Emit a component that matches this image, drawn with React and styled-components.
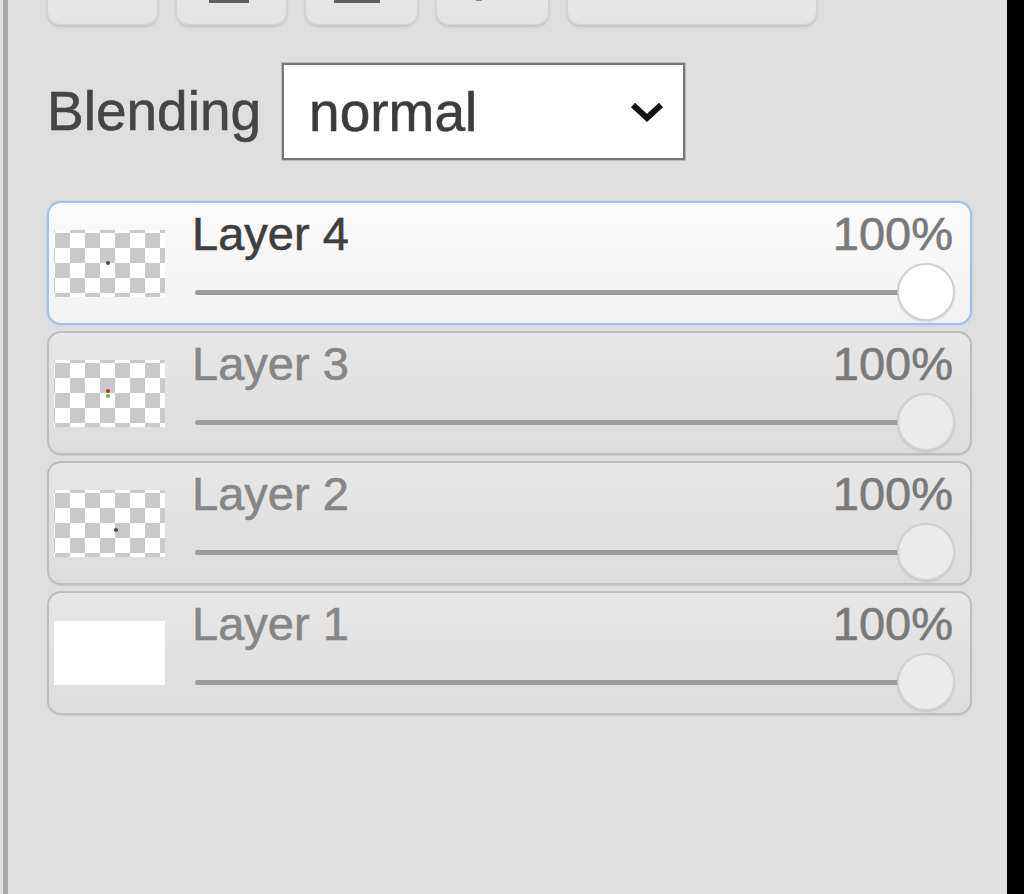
import React from "react";
import styled, { createGlobalStyle } from "styled-components";

const Global = createGlobalStyle`
  html, body { margin: 0; padding: 0; background: #dedede; }
  #root { height: 894px; }
  * { box-sizing: border-box; }
`;

const Page = styled.div`
  display: flex;
  height: 894px;
  overflow: hidden;
  background: #dedede;
  font-family: "Liberation Sans", Arial, sans-serif;
`;

const Frame = styled.div`
  flex: 1;
  margin-left: 3px;
  border-left: 5px solid #a9a9a9;
  padding: 0 35px 0 39px;
  display: flex;
  flex-direction: column;
`;

const BlackEdge = styled.div`
  width: 17px;
  background: #000;
`;

const Toolbar = styled.div`
  display: flex;
  gap: 18px;
  margin-top: -46px;
  height: 71px;
`;

const ToolButton = styled.div`
  width: ${(p) => p.$w}px;
  height: 71px;
  border-radius: 13px;
  background: linear-gradient(#eaeaea, #e4e4e4);
  border: 1px solid #d2d2d2;
  box-shadow: 0 2px 3px rgba(0, 0, 0, 0.12);
  display: flex;
  justify-content: center;
  align-items: flex-end;
  padding-bottom: 21px;
  padding-right: ${(p) => p.$shift || 0}px;
`;

const BlendRow = styled.div`
  display: flex;
  align-items: center;
  gap: 21px;
  margin-top: 38px;
`;

const Label = styled.span`
  font-size: 55px;
  color: #454545;
  line-height: 1;
  -webkit-text-stroke: 0.6px #454545;
`;

const SelectBox = styled.div`
  width: 403px;
  height: 97px;
  background: #fff;
  border: 2px solid #767676;
  box-shadow: 0 0 0 1px #b9b9b9;
  display: flex;
  align-items: center;
  justify-content: space-between;
  padding: 0 18px 0 25px;
  font-size: 55px;
  color: #3c3c3c;
  -webkit-text-stroke: 0.6px #3c3c3c;
`;

const LayerList = styled.div`
  display: flex;
  flex-direction: column;
  gap: 6px;
  margin-top: 41px;
`;

const Item = styled.div`
  display: flex;
  align-items: center;
  height: 124px;
  border: 2px solid ${(p) => (p.$active ? "#a7bfe7" : "#bdbdbd")};
  border-radius: 14px;
  background: ${(p) =>
    p.$active
      ? "linear-gradient(#fbfbfb, #f2f2f2)"
      : "linear-gradient(#e7e7e7, #dcdcdc)"};
  box-shadow: ${(p) =>
    p.$active ? "0 0 2px rgba(120,160,230,0.5)" : "0 1px 1px rgba(0,0,0,0.08)"};
  padding: 0 17px 0 5px;
`;

const Thumb = styled.div`
  position: relative;
  flex: none;
  width: 111px;
  height: ${(p) => (p.$plain ? 64 : 67)}px;
  margin-right: 27px;
  background-color: #fff;
  background-image: ${(p) =>
    p.$plain
      ? "none"
      : "conic-gradient(#fff 25%, #c9c9c9 0 50%, #fff 0 75%, #c9c9c9 0)"};
  background-size: 30px 30px;
  background-position: 1px 3px;
`;

const Dot = styled.span`
  position: absolute;
  width: 4px;
  height: 4px;
  border-radius: 50%;
  background: ${(p) => p.$c};
`;

const Content = styled.div`
  flex: 1;
  align-self: stretch;
  display: flex;
  flex-direction: column;
  padding-top: 5px;
`;

const TitleRow = styled.div`
  display: flex;
  justify-content: space-between;
  height: 52px;
  line-height: 52px;
  font-size: 47px;
`;

const Title = styled.span`
  color: ${(p) => (p.$active ? "#3f3f3f" : "#868686")};
  -webkit-text-stroke: 0.6px ${(p) => (p.$active ? "#3f3f3f" : "#868686")};
`;

const Percent = styled.span`
  color: #7a7a7a;
  -webkit-text-stroke: 0.6px #7a7a7a;
`;

const SliderRow = styled.div`
  display: flex;
  align-items: center;
  height: 60px;
  margin-top: 2px;
  padding-left: 3px;
`;

const Track = styled.div`
  flex: 1;
  height: 5px;
  border-radius: 3px;
  background: #9c9c9c;
  margin-right: -30px;
`;

const Knob = styled.div`
  flex: none;
  z-index: 1;
  width: 58px;
  height: 58px;
  border-radius: 50%;
  margin-right: -2px;
  background: ${(p) => (p.$active ? "#ffffff" : "#ebebeb")};
  border: 2px solid #d0d0d0;
  box-shadow: 0 1px 2px rgba(0, 0, 0, 0.12);
`;

const Chevron = () => (
  <svg width="36" height="24" viewBox="0 0 36 24">
    <path d="M4 5 L18 18 L32 5" fill="none" stroke="#111" strokeWidth="6" />
  </svg>
);

const BarIcon = ({ w }) => (
  <svg width={w} height="40" viewBox={`0 0 ${w} 40`}>
    <rect x="0" y="0" width={w} height="35" fill="#e6e6e6" />
    <rect x="0" y="34" width={w} height="6" fill="#5f5f5f" />
  </svg>
);

const TickIcon = () => (
  <svg width="12" height="40" viewBox="0 0 12 40">
    <rect x="3" y="0" width="6" height="38" fill="#8a8a8a" />
  </svg>
);

const layers = [
  { name: "Layer 4", active: true, dots: [{ x: 52, y: 31, c: "#4a4a4a" }] },
  {
    name: "Layer 3",
    dots: [
      { x: 52, y: 29, c: "#c0302a" },
      { x: 52, y: 34, c: "#5fbf4a" },
    ],
  },
  { name: "Layer 2", dots: [{ x: 60, y: 38, c: "#4a4a4a" }] },
  { name: "Layer 1", plain: true, dots: [] },
];

export default function App() {
  return (
    <Page>
      <Global />
      <Frame>
        <Toolbar>
          <ToolButton $w={111} />
          <ToolButton $w={111} $shift={6}>
            <BarIcon w={40} />
          </ToolButton>
          <ToolButton $w={113} $shift={10}>
            <BarIcon w={46} />
          </ToolButton>
          <ToolButton $w={113} $shift={28}>
            <TickIcon />
          </ToolButton>
          <ToolButton $w={250} />
        </Toolbar>

        <BlendRow>
          <Label>Blending</Label>
          <SelectBox>
            <span>normal</span>
            <Chevron />
          </SelectBox>
        </BlendRow>

        <LayerList>
          {layers.map((l) => (
            <Item key={l.name} $active={l.active}>
              <Thumb $plain={l.plain}>
                {l.dots.map((d, i) => (
                  <Dot key={i} $c={d.c} style={{ left: d.x, top: d.y }} />
                ))}
              </Thumb>
              <Content>
                <TitleRow>
                  <Title $active={l.active}>{l.name}</Title>
                  <Percent>100%</Percent>
                </TitleRow>
                <SliderRow>
                  <Track />
                  <Knob $active={l.active} />
                </SliderRow>
              </Content>
            </Item>
          ))}
        </LayerList>
      </Frame>
      <BlackEdge />
    </Page>
  );
}
